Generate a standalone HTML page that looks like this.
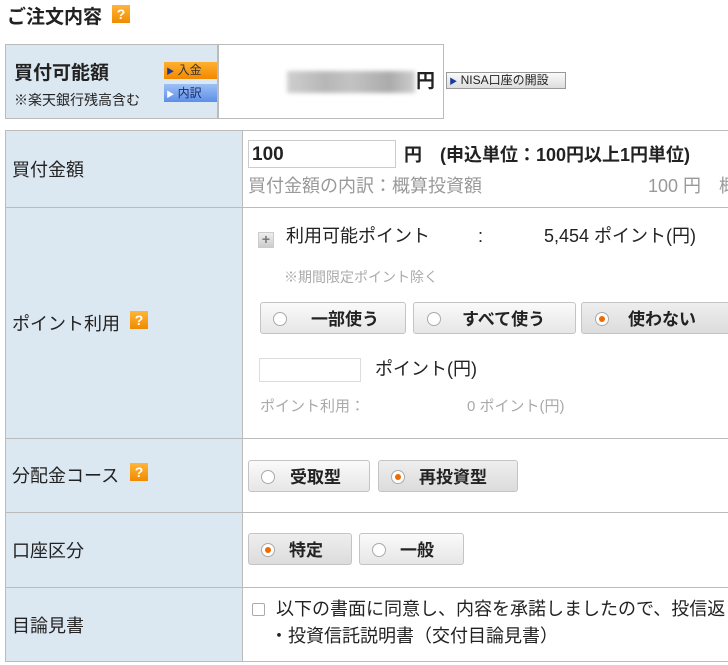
<!DOCTYPE html>
<html><head><meta charset="utf-8"><style>
body{margin:0;width:728px;height:665px;overflow:hidden;background:#fff;font-family:"Liberation Sans","Noto Sans CJK JP",sans-serif;color:#222;position:relative}
.a{position:absolute;white-space:nowrap;line-height:1.2}
.t{transform:translateY(2px)}
.q{position:absolute;width:18px;height:18px;background:linear-gradient(#ffb53a,#f08a00);color:#fff;font-size:14px;font-weight:bold;text-align:center;line-height:18px}
.blue{background:#dce8f1}
.btn{position:absolute;height:32px;border:1px solid #c4c4c4;border-radius:3px;background:linear-gradient(#fafafa,#e6e6e6);font-size:17px;font-weight:bold;line-height:33px;box-sizing:border-box}
.btn.on{background:linear-gradient(#eee,#dcdcdc)}
.r{position:absolute;width:14px;height:14px;border:1px solid #aaa;border-radius:50%;background:#fff;top:9px;box-sizing:border-box}
.r.on::after{content:"";position:absolute;left:3px;top:3px;width:6px;height:6px;border-radius:50%;background:#f06a00}
.hl{position:absolute;left:5px;width:723px;height:1px;background:#bbb}
.g{color:#999}
</style></head><body>
<div class="a" style="left:7px;top:7px;font-size:19px;font-weight:bold">ご注文内容</div>
<div class="q" style="left:112px;top:5px">?</div>

<div class="a blue" style="left:5px;top:44px;width:212px;height:73px;border:1px solid #bbb"></div>
<div class="a" style="left:217px;top:44px;width:225px;height:73px;border:1px solid #bbb;border-left:1px solid #bbb"></div>
<div class="a" style="left:14px;top:63px;font-size:19px;font-weight:bold">買付可能額</div>
<div class="a" style="left:14px;top:92px;font-size:14px">※楽天銀行残高含む</div>
<div class="a" style="left:164px;top:62px;width:53px;height:17px;background:linear-gradient(#ffb030,#f28800);font-size:12px;line-height:17px;color:#333"><span style="color:#1a3a9a;font-size:8px">&nbsp;▶</span> 入金</div>
<div class="a" style="left:164px;top:84px;width:53px;height:18px;background:linear-gradient(#9cc0f5,#5d8fe8);font-size:12px;line-height:18px;color:#1a2a6a"><span style="font-size:8px;color:#fff">&nbsp;▶</span> 内訳</div>
<div class="a" style="left:287px;top:71px;width:128px;height:22px;background:linear-gradient(90deg,#bbb,#999 30%,#aaa 50%,#888 80%,#bbb);opacity:.7;filter:blur(2px)"></div>
<div class="a" style="left:416px;top:71px;font-size:19px;font-weight:bold">円</div>
<div class="a" style="left:446px;top:72px;width:120px;height:17px;border:1px solid #999;background:linear-gradient(#fafafa,#ddd);font-size:12px;line-height:15px;box-sizing:border-box"><span style="color:#1a3a9a;font-size:8px">&nbsp;▶</span> NISA口座の開設</div>

<div class="a blue" style="left:5px;top:130px;width:237px;height:531px"></div>
<div class="a" style="left:5px;top:130px;width:1px;height:532px;background:#bbb"></div>
<div class="a" style="left:242px;top:130px;width:1px;height:532px;background:#bbb"></div>
<div class="hl" style="top:130px"></div>
<div class="hl" style="top:207px"></div>
<div class="hl" style="top:438px"></div>
<div class="hl" style="top:512px"></div>
<div class="hl" style="top:587px"></div>
<div class="hl" style="top:661px"></div>

<div class="a" style="left:12px;top:160px;font-size:18px">買付金額</div>
<div class="a" style="left:248px;top:140px;width:148px;height:28px;border:1px solid #ccc;box-sizing:border-box;font-size:19px;font-weight:bold;line-height:28px;padding-left:3px">100</div>
<div class="a" style="left:404px;top:145px;font-size:18px;font-weight:bold">円　(申込単位：100円以上1円単位)</div>
<div class="a g" style="left:248px;top:176px;font-size:18px">買付金額の内訳：概算投資額</div>
<div class="a g" style="left:648px;top:176px;font-size:18px">100 円　概</div>

<div class="a" style="left:12px;top:314px;font-size:18px">ポイント利用</div>
<div class="q" style="left:130px;top:311px">?</div>
<div class="a" style="left:258px;top:232px;width:16px;height:16px;background:linear-gradient(#eee,#ccc);border:1px solid #ccc;box-sizing:border-box;color:#777;font-size:14px;line-height:13px;text-align:center;font-weight:bold">+</div>
<div class="a" style="left:286px;top:226px;font-size:18px">利用可能ポイント</div>
<div class="a" style="left:478px;top:226px;font-size:18px">:</div>
<div class="a" style="left:544px;top:226px;font-size:18px">5,454 ポイント(円)</div>
<div class="a g" style="left:284px;top:269px;font-size:14px;color:#aaa">※期間限定ポイント除く</div>
<div class="btn" style="left:260px;top:302px;width:146px"><div class="r" style="left:12px"></div><span style="position:absolute;left:50px">一部使う</span></div>
<div class="btn" style="left:413px;top:302px;width:163px"><div class="r" style="left:13px"></div><span style="position:absolute;left:48px">すべて使う</span></div>
<div class="btn on" style="left:581px;top:302px;width:150px"><div class="r on" style="left:13px"></div><span style="position:absolute;left:46px">使わない</span></div>
<div class="a" style="left:259px;top:358px;width:102px;height:24px;border:1px solid #ddd;box-sizing:border-box"></div>
<div class="a" style="left:375px;top:359px;font-size:18px">ポイント(円)</div>
<div class="a" style="left:260px;top:398px;font-size:15px;color:#aaa">ポイント利用：</div>
<div class="a" style="left:467px;top:398px;font-size:15px;color:#aaa">0 ポイント(円)</div>

<div class="a" style="left:12px;top:466px;font-size:18px">分配金コース</div>
<div class="q" style="left:130px;top:463px">?</div>
<div class="btn" style="left:248px;top:460px;width:122px"><div class="r" style="left:12px"></div><span style="position:absolute;left:41px">受取型</span></div>
<div class="btn on" style="left:378px;top:460px;width:140px"><div class="r on" style="left:12px"></div><span style="position:absolute;left:40px">再投資型</span></div>

<div class="a" style="left:12px;top:541px;font-size:18px">口座区分</div>
<div class="btn on" style="left:248px;top:533px;width:104px"><div class="r on" style="left:12px"></div><span style="position:absolute;left:40px">特定</span></div>
<div class="btn" style="left:359px;top:533px;width:105px"><div class="r" style="left:12px"></div><span style="position:absolute;left:40px">一般</span></div>

<div class="a" style="left:12px;top:616px;font-size:18px">目論見書</div>
<div class="a" style="left:252px;top:603px;width:13px;height:13px;border:1px solid #aaa;border-radius:2px;box-sizing:border-box"></div>
<div class="a" style="left:276px;top:599px;font-size:18px">以下の書面に同意し、内容を承諾しましたので、投信返</div>
<div class="a" style="left:270px;top:626px;font-size:18px">・投資信託説明書（交付目論見書）</div>
</body></html>
